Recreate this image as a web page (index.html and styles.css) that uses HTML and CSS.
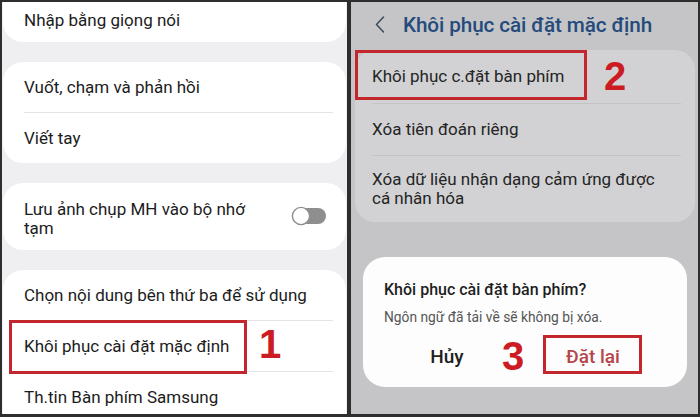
FILE: index.html
```html
<!DOCTYPE html>
<html lang="vi">
<head>
<meta charset="utf-8">
<title>Khôi phục cài đặt bàn phím</title>
<link rel="stylesheet" href="styles.css">
</head>
<body>
<div class="frame">
  <section class="left">
    <div class="card card-top">
      <div class="row row-first">Nhập bằng giọng nói</div>
    </div>
    <div class="card">
      <div class="row">Vuốt, chạm và phản hồi</div>
      <div class="divider"></div>
      <div class="row">Viết tay</div>
    </div>
    <div class="card card-toggle">
      <div class="toggle-text">Lưu ảnh chụp MH vào bộ nhớ tạm</div>
      <svg class="toggle" width="36" height="20" viewBox="0 0 36 20">
        <rect x="8" y="2" width="27" height="16" rx="8" fill="#8e8e8e"/>
        <circle cx="10" cy="10" r="8.6" fill="#ffffff" stroke="#8e8e8e" stroke-width="1.4"/>
      </svg>
    </div>
    <div class="card card-last">
      <div class="row">Chọn nội dung bên thứ ba để sử dụng</div>
      <div class="divider"></div>
      <div class="row mark-row">Khôi phục cài đặt mặc định
        <span class="mark-box box-1"></span>
        <span class="step step-1">1</span>
      </div>
      <div class="divider"></div>
      <div class="row">Th.tin Bàn phím Samsung</div>
    </div>
  </section>
  <section class="right">
    <header class="head">
      <svg class="back" width="10" height="17" viewBox="0 0 10 17">
        <path d="M8.5 1 L1.5 8.5 L8.5 16" fill="none" stroke="#3d4a5a" stroke-width="1.5" stroke-linecap="round" stroke-linejoin="round"/>
      </svg>
      <h1 class="title">Khôi phục cài đặt mặc định</h1>
    </header>
    <div class="rcard">
      <div class="rrow rrow-1 mark-row">Khôi phục c.đặt bàn phím
        <span class="mark-box box-2"></span>
        <span class="step step-2">2</span>
      </div>
      <div class="rdivider"></div>
      <div class="rrow rrow-2">Xóa tiên đoán riêng</div>
      <div class="rdivider"></div>
      <div class="rrow rrow-3">Xóa dữ liệu nhận dạng cảm ứng được cá nhân hóa</div>
    </div>
    <div class="dialog">
      <div class="d-title">Khôi phục cài đặt bàn phím?</div>
      <div class="d-sub">Ngôn ngữ đã tải về sẽ không bị xóa.</div>
      <div class="actions">
        <span class="btn btn-cancel">Hủy</span>
        <span class="btn btn-reset">Đặt lại</span>
        <span class="step step-3">3</span>
        <span class="mark-box box-3"></span>
      </div>
    </div>
  </section>
</div>
</body>
</html>
```
FILE: styles.css
```css
* { box-sizing: border-box; }
html, body { margin: 0; padding: 0; }
body {
  width: 700px;
  height: 417px;
  overflow: hidden;
  font-family: Roboto, "Noto Sans", "Liberation Sans", sans-serif;
  background: #2e2e2e;
}
.frame {
  width: 700px;
  height: 417px;
  border: 2px solid #2e2e2e;
  border-bottom-width: 3px;
  display: flex;
  background: #2e2e2e;
}

/* left panel */
.left {
  width: 345px;
  flex: none;
  background: #efeff1;
  display: flex;
  flex-direction: column;
  gap: 20px;
  overflow: hidden;
  padding: 0 1px;
}
.card {
  background: #ffffff;
  border-radius: 20px;
  flex: none;
  color: #1c1c1c;
  font-size: 17px;
}
.card-top {
  height: 40px;
  border-radius: 0 0 20px 20px;
}
.row {
  height: 50px;
  display: flex;
  align-items: center;
  padding-left: 21px;
  line-height: 20px;
}
.row-first {
  height: 40px;
  align-items: flex-start;
  padding-top: 8px;
}
.divider {
  height: 1px;
  background: #e4e4e6;
  margin: 0 13px 0 21px;
}
.card-toggle {
  height: 67px;
  display: flex;
  align-items: flex-start;
  justify-content: space-between;
  padding: 17px 19px 0 21px;
}
.toggle-text {
  width: 252px;
  line-height: 19px;
}
.toggle {
  margin-top: 6px;
  display: block;
}
.card-last {
  flex: 1;
  border-radius: 20px 20px 0 0;
}
.mark-row { position: relative; }

.mark-box {
  position: absolute;
  border: 3px solid #c3262d;
}
.step {
  position: absolute;
  font-family: "Liberation Sans", Arial, sans-serif;
  font-weight: 700;
  font-size: 40px;
  line-height: 40px;
  color: #cc1b22;
}
.box-1 { left: 6px; top: -1px; width: 238px; height: 54px; }
.step-1 { left: 256px; top: 3px; }

/* right panel */
.right {
  flex: 1;
  border-left: 4px solid #2e2e2e;
  background: #c5c5c7;
  display: flex;
  flex-direction: column;
  overflow: hidden;
}
.head {
  height: 48px;
  flex: none;
  display: flex;
  align-items: center;
  padding: 0 0 3px 24px;
  gap: 18px;
}
.back { display: block; }
.title {
  margin: 0;
  font-size: 20.7px;
  font-weight: 500;
  line-height: 24px;
  color: #244b7c;
  letter-spacing: -0.1px;
}
.rcard {
  margin: 0 3px 0 4px;
  background: #d2d2d4;
  border-radius: 20px;
  color: #242424;
  font-size: 17px;
  flex: none;
}
.rrow {
  display: flex;
  align-items: center;
  padding: 0 30px 0 17px;
  line-height: 19px;
}
.rrow-1 { height: 53px; }
.rrow-2 { height: 51px; }
.rrow-3 { height: 66px; }
.rdivider {
  height: 1px;
  background: #c4c4c6;
  margin: 0 14px 0 17px;
}
.box-2 { left: 0; top: 0; width: 232px; height: 50px; }
.step-2 { left: 249px; top: 6px; }

.dialog {
  margin: 35px 11px 0 12px;
  background: #fdfdfd;
  border-radius: 22px;
  padding: 23px 21px 10px;
  flex: none;
}
.d-title {
  font-size: 16px;
  font-weight: 500;
  line-height: 20px;
  color: #1e1e1e;
}
.d-sub {
  margin-top: 8px;
  font-size: 13.8px;
  line-height: 18px;
  color: #555555;
}
.actions {
  position: relative;
  margin: 11px -21px 0;
  padding: 0 21px 0 11px;
  height: 40px;
  display: grid;
  grid-template-columns: 1fr 1fr;
  align-items: center;
  justify-items: center;
}
.btn {
  font-size: 19px;
  font-weight: 500;
  line-height: 22px;
}
.btn-cancel { color: #1f1f1f; }
.btn-reset { color: #b5464b; }
.step-3 { left: 139px; top: -1px; }
.box-3 { left: 180px; top: -2px; width: 99px; height: 39px; }
```
